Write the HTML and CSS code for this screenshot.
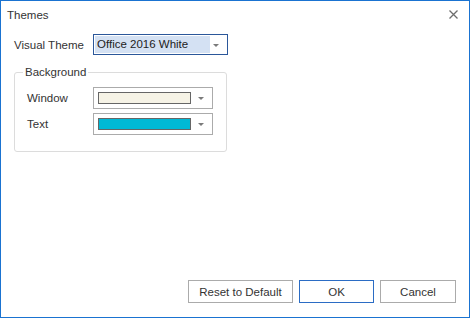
FILE: index.html
```html
<!DOCTYPE html>
<html lang="en">
<head>
    <meta charset="UTF-8">
    <title>Themes</title>
    <link rel="stylesheet" href="styles.css">
</head>
<body>
    <div class="dialog">
        <div class="title-bar">
            <span class="title">Themes</span>
            <button class="close-button" aria-label="Close">
                <svg width="9" height="9" viewBox="0 0 9 9"><path d="M0.5 0.5L8.5 8.5M8.5 0.5L0.5 8.5" stroke="#6d6d6d" stroke-width="1.3"/></svg>
            </button>
        </div>

        <div class="content">
            <div class="row theme-row">
                <label class="label">Visual Theme</label>
                <div class="combo combo-theme">
                    <span class="combo-value">Office 2016 White</span>
                    <span class="arrow"></span>
                </div>
            </div>

            <fieldset class="group">
                <legend>Background</legend>
                <div class="row">
                    <label class="label">Window</label>
                    <div class="combo combo-color">
                        <span class="swatch swatch-window"></span>
                        <span class="arrow"></span>
                    </div>
                </div>
                <div class="row">
                    <label class="label">Text</label>
                    <div class="combo combo-color">
                        <span class="swatch swatch-text"></span>
                        <span class="arrow"></span>
                    </div>
                </div>
            </fieldset>
        </div>

        <div class="buttons">
            <button class="btn btn-reset">Reset to Default</button>
            <button class="btn btn-ok">OK</button>
            <button class="btn btn-cancel">Cancel</button>
        </div>
    </div>
</body>
</html>
```

FILE: styles.css
```css
body {
    margin: 0;
    font-family: "Liberation Sans", Arial, sans-serif;
    font-size: 11px;
    color: #333;
}
.dialog {
    width: 470px;
    height: 318px;
    box-sizing: border-box;
    border: 1px solid #1a73d1;
    background-color: #fff;
    display: flex;
    flex-direction: column;
}
.title-bar {
    height: 27px;
    display: flex;
    align-items: center;
    justify-content: space-between;
    padding-left: 6px;
    padding-right: 11px;
}
.title {
    font-size: 11.5px;
    color: #333;
}
.close-button {
    background: none;
    border: none;
    padding: 0;
    width: 9px;
    height: 9px;
    display: flex;
}
.content {
    padding: 6px 0 0 13px;
}
.row {
    display: flex;
    align-items: center;
}
.label {
    width: 79px;
    font-size: 11.5px;
}
.combo {
    position: relative;
    box-sizing: border-box;
    border: 1px solid #ababab;
    background-color: #fff;
    display: flex;
    align-items: center;
}
.combo-theme {
    width: 135px;
    height: 21px;
    border-color: #2b579a;
    padding: 1px;
}
.combo-value {
    background-color: #d4e1f3;
    height: 100%;
    width: 113px;
    line-height: 17px;
    padding-left: 2px;
    font-size: 11.5px;
    color: #222;
}
.arrow {
    position: absolute;
    right: 8px;
    top: 50%;
    margin-top: -1px;
    width: 0;
    height: 0;
    border-left: 3px solid transparent;
    border-right: 3px solid transparent;
    border-top: 3px solid #7a7a7a;
}
.group {
    margin: 11px 0 0 0;
    width: 213px;
    height: 86px;
    box-sizing: border-box;
    border: 1px solid #dcdcdc;
    border-radius: 3px;
    padding: 9px 0 0 12px;
}
.group legend {
    padding: 0 2px;
    margin-left: -4px;
    font-size: 11.5px;
}
.group .row {
    margin-bottom: 4px;
}
.group .label {
    width: 66px;
}
.combo-color {
    width: 120px;
    height: 22px;
    padding: 0 0 0 4px;
}
.swatch {
    width: 93px;
    height: 12px;
    box-sizing: border-box;
    border: 1px solid #666;
}
.swatch-window {
    background-color: #f6f3e6;
}
.swatch-text {
    background-color: #00b9d5;
}
.buttons {
    margin-top: auto;
    display: flex;
    justify-content: flex-end;
    gap: 6px;
    padding: 0 13px 14px 0;
}
.btn {
    height: 23px;
    box-sizing: border-box;
    background-color: #fff;
    border: 1px solid #ababab;
    font-family: "Liberation Sans", Arial, sans-serif;
    font-size: 11.5px;
    color: #333;
    padding: 0;
}
.btn-reset {
    width: 105px;
}
.btn-ok {
    width: 75px;
    border-color: #2b6cc4;
}
.btn-cancel {
    width: 76px;
}
```
